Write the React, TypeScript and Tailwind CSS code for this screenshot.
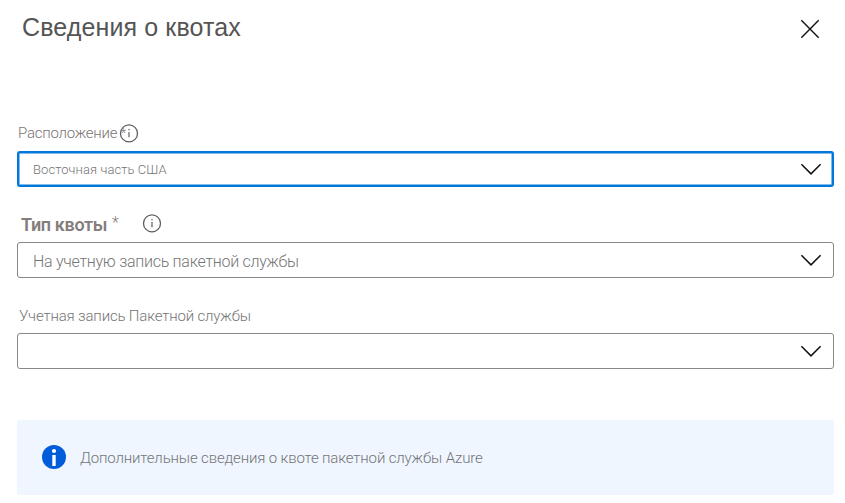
import type { ReactNode } from "react";

function InfoOutline() {
  return (
    <svg className="block size-5 shrink-0" viewBox="0 0 20 20" fill="none">
      <circle cx="10" cy="10.4" r="8.5" stroke="#605e5c" strokeWidth="1.3" />
      <path d="M10 9v5.3" stroke="#8a8886" strokeWidth="1.6" />
      <circle cx="10" cy="6.6" r="0.9" fill="#8a8886" />
    </svg>
  );
}

function Chevron() {
  return (
    <svg className="block h-3 w-[22px] shrink-0" viewBox="0 0 22 12" fill="none" stroke="#111" strokeWidth="1.5">
      <path d="M1.4 1.3 11 10.9 20.6 1.3" />
    </svg>
  );
}

function Select({ active = false, children }: { active?: boolean; children?: ReactNode }) {
  return (
    <button
      className={
        "flex h-9 w-full items-center justify-between rounded-[3px] bg-white text-left " +
        (active ? "border-2 border-[#0078d9] pl-3.5 pr-2.5 shadow-[inset_0_0_0_0.5px_#0078d9]" : "border border-[#8a8886] pl-[15px] pr-[11px]")
      }
    >
      <span className="whitespace-nowrap">{children}</span>
      <Chevron />
    </button>
  );
}

export default function App() {
  return (
    <main className="h-[503px] w-[845px] overflow-hidden bg-white pl-[17px] pr-[11px] font-['Roboto',sans-serif] font-light text-[#757575]">
      <header className="flex h-[123px] items-start justify-between pl-[5px] pr-3.5 pt-3">
        <h1 className="whitespace-nowrap font-['Liberation_Sans',Arial,sans-serif] text-[25px] font-normal leading-[31px] tracking-[0.12px] text-[#555]">
          Сведения о квотах
        </h1>
        <button aria-label="Закрыть" className="mt-[7px]">
          <svg className="block size-5" viewBox="0 0 20 20" fill="none" stroke="#111" strokeWidth="1.4">
            <path d="m1.3 1.3 17.4 17.4M18.7 1.3 1.3 18.7" />
          </svg>
        </button>
      </header>

      <div className="flex h-7 items-start pl-px text-[#7c7474]">
        <span className="w-[101px] whitespace-nowrap text-[15px] leading-5 tracking-[-0.24px]">Расположение</span>
        <span className="relative">
          <InfoOutline />
          <span className="absolute left-[2px] top-[2px] text-xs leading-4">*</span>
        </span>
      </div>
      <Select active>
        <span className="text-[13px] tracking-[0.08px]">Восточная часть США</span>
      </Select>

      <div className="flex h-[55px] items-start pl-1 pt-[26px] text-[#857c7c]">
        <span className="mt-px w-[91px] whitespace-nowrap text-[18px] font-semibold leading-[22px] tracking-[-0.32px]">Тип квоты</span>
        <span className="w-[30px] text-base leading-5">*</span>
        <InfoOutline />
      </div>
      <Select>
        <span className="block pt-[3px] text-base tracking-[-0.28px]">На учетную запись пакетной службы</span>
      </Select>

      <div className="flex h-[55px] items-start whitespace-nowrap pl-0.5 pt-7 text-[15px] leading-5 tracking-[-0.16px]">
        Учетная запись Пакетной службы
      </div>
      <Select />

      <section className="mt-[51px] flex h-[75px] items-center rounded-[3px] bg-[#eff6ff] pl-[25px]">
        <svg className="-mt-px block size-6 shrink-0" viewBox="0 0 24 24">
          <circle cx="12" cy="12" r="12" fill="#015cda" />
          <circle cx="12" cy="6" r="2.1" fill="white" />
          <path d="M10.3 10h3.4v11h-3.4z" fill="white" />
        </svg>
        <p className="ml-3.5 whitespace-nowrap pt-px text-[15px] tracking-[-0.14px]">Дополнительные сведения о квоте пакетной службы Azure</p>
      </section>
    </main>
  );
}
